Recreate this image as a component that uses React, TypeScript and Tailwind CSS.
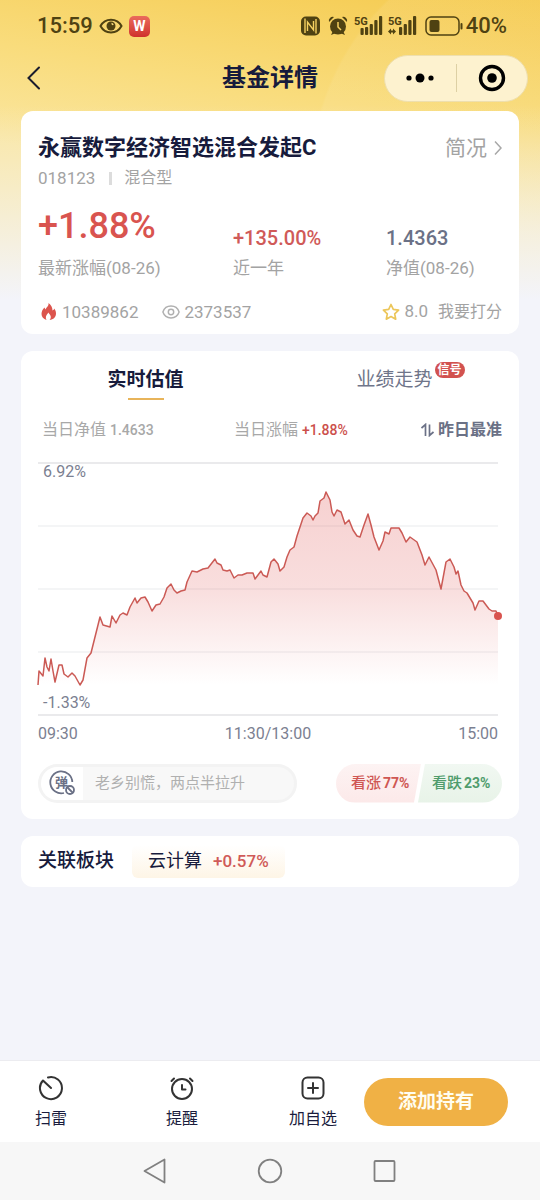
import { FC, ReactNode, useState } from "react";

interface CardProps {
    children: ReactNode;
    className?: string;
}

interface MetricProps {
    label: string;
    value: string;
    valueClass: string;
}

interface ActionProps {
    label: string;
    children: ReactNode;
}

// [x, y] in the 460 x 252 space of the chart
const points: [number, number][] = [
    [0, 222], [1, 208], [5, 213], [7, 195], [9, 204], [11, 208], [13, 196], [15, 208],
    [17, 219], [21, 202], [24, 202], [26, 211], [30, 214], [34, 210], [37, 213], [42, 222],
    [45, 217], [49, 195], [53, 190], [61, 158], [62, 154], [65, 162], [72, 164], [74, 153],
    [78, 160], [82, 152], [85, 150], [89, 152], [92, 144], [97, 135], [99, 140], [103, 135],
    [107, 134], [110, 139], [114, 148], [118, 142], [122, 141], [126, 134], [129, 125], [133, 121],
    [136, 127], [139, 130], [143, 128], [147, 127], [149, 119], [154, 108], [159, 109], [165, 106],
    [170, 105], [177, 96], [179, 100], [183, 102], [185, 107], [189, 108], [192, 107], [196, 115],
    [200, 112], [204, 112], [209, 110], [215, 110], [217, 116], [223, 108], [225, 112], [229, 114],
    [233, 99], [236, 96], [240, 101], [242, 108], [246, 104], [249, 94], [252, 87], [256, 84],
    [259, 73], [265, 55], [269, 50], [273, 53], [275, 57], [277, 53], [280, 50], [282, 38],
    [286, 35], [288, 29], [292, 37], [294, 49], [296, 53], [299, 47], [303, 49], [307, 61],
    [311, 57], [315, 67], [319, 73], [322, 74], [326, 62], [330, 51], [333, 62], [336, 74],
    [341, 87], [345, 78], [347, 69], [351, 71], [353, 65], [361, 65], [364, 70], [368, 79],
    [372, 74], [379, 79], [384, 92], [387, 102], [391, 94], [398, 107], [403, 126], [408, 99],
    [412, 96], [416, 104], [418, 111], [420, 108], [423, 122], [426, 128], [429, 130], [435, 140],
    [437, 147], [441, 138], [445, 138], [448, 142], [451, 146], [454, 148], [458, 148], [460, 153],
];

const line = points.map(([x, y]) => `${x},${y}`).join(" ");

const Card: FC<CardProps> = ({ children, className = "" }) => (
    <section className={`rounded-xl bg-white ${className}`}>{children}</section>
);

const Metric: FC<MetricProps> = ({ label, value, valueClass }) => (
    <div className="flex flex-col-reverse gap-[2px]">
        <dt className="text-[17px] leading-6 whitespace-nowrap text-[#a3a3a3]">{label}</dt>
        <dd className={valueClass}>{value}</dd>
    </div>
);

const Action: FC<ActionProps> = ({ label, children }) => (
    <button className="flex w-12 flex-col items-center gap-2 text-base leading-5 whitespace-nowrap text-[#1a1c3d]">
        <svg viewBox="0 0 26 26" fill="none" stroke="#333" strokeWidth="2" strokeLinecap="round" strokeLinejoin="round" className="size-[26px]">
            {children}
        </svg>
        {label}
    </button>
);

const Signal: FC<{ data?: boolean }> = ({ data }) => (
    <svg viewBox="0 0 30 20" fill="#4f4212" className="h-5 w-[30px]">
        <text x="0" y="9" fontSize="11" fontWeight="700" fontFamily="Roboto, sans-serif">5G</text>
        {data ? (
            <path d="M0 15.500l3-3v2h2v-2l3 3-3 3v-2H3v2z" />
        ) : (
            <rect x="6.500" y="12" width="3.200" height="7" rx="1" />
        )}
        <rect x="11" y="11" width="3.200" height="8" rx="1" />
        <rect x="15.700" y="8" width="3.200" height="11" rx="1" />
        <rect x="20.300" y="4" width="3.200" height="15" rx="1" />
        <rect x="25" y="0" width="3.200" height="19" rx="1" />
    </svg>
);

const StatusBar: FC = () => (
    <div className="flex h-[52px] items-center justify-between pr-[33px] pl-[37px] text-[22px] leading-6 font-medium text-[#4f4212]">
        <div className="flex items-center gap-[6px]">
            <span>15:59</span>
            <svg viewBox="0 0 24 18" fill="none" stroke="#4f4212" strokeWidth="2" className="h-[18px] w-6">
                <path d="M1.500 9C6 .5 18 .5 22.500 9C18 17.500 6 17.500 1.500 9z" />
                <circle cx="12" cy="9" r="4.500" fill="#4f4212" stroke="none" />
                <path d="M12.500 6.500a2 2 0 0 1 1.500 1.500" stroke="#f8dc80" strokeWidth="1.500" />
            </svg>
            <span className="flex size-[21px] items-center justify-center rounded-[5px] bg-linear-to-b from-[#ea6a5c] to-[#cf302d] text-sm font-bold text-white">
                W
            </span>
        </div>
        <div className="flex items-center">
            <svg viewBox="0 0 20 20" className="mr-[7px] size-5">
                <rect x="0" y="0.500" width="19" height="19" rx="5" fill="#4f4212" />
                <path d="M4 2.500V17M15 17.500V3M6.500 15V6L12.500 14V5" fill="none" stroke="#f6d160" strokeWidth="1.400" />
            </svg>
            <svg viewBox="0 0 20 20" fill="#4f4212" className="mr-[6px] size-5">
                <circle cx="10" cy="10.500" r="8" />
                <path d="M1 6a4 4 0 0 1 5-5zM19 6a4 4 0 0 0-5-5zM3 19l2-4 3 2zM17 19l-2-4-3 2z" />
                <path d="M10 6v5l3 3" fill="none" stroke="#f6d160" strokeWidth="1.500" />
            </svg>
            <Signal />
            <span className="w-1" />
            <Signal data />
            <svg viewBox="0 0 39 20" fill="none" stroke="#4f4212" strokeWidth="1.500" className="mr-[2px] ml-[7px] h-5 w-[39px]">
                <rect x="1" y="1" width="33" height="18" rx="5" />
                <rect x="4.500" y="4" width="10" height="12" rx="2" fill="#4f4212" stroke="none" />
                <path d="M36.500 8v4.500" strokeWidth="2" strokeLinecap="round" />
            </svg>
            <span>40%</span>
        </div>
    </div>
);

const NavBar: FC = () => (
    <header className="grid h-[52px] grid-cols-[1fr_auto_1fr] items-center px-3">
        <button aria-label="返回" className="ml-[9px] flex size-8 items-center">
            <svg viewBox="0 0 24 24" fill="none" stroke="#1a1c2d" strokeWidth="2" strokeLinecap="round" className="size-6">
                <path d="M18 1.500L7.500 12L18 22.500" />
            </svg>
        </button>
        <h1 className="text-2xl leading-8 font-bold text-[#171b3c]">基金详情</h1>
        <div className="flex h-[47px] w-36 items-center justify-self-end rounded-full border border-[#eedfae] bg-[#fdf2cf]">
            <button aria-label="更多" className="flex flex-1 justify-center">
                <svg viewBox="0 0 30 12" className="h-3 w-[30px]">
                    <circle cx="4" cy="6" r="2.600" />
                    <circle cx="15" cy="6" r="4.500" />
                    <circle cx="26" cy="6" r="2.600" />
                </svg>
            </button>
            <span className="h-7 w-px bg-[#ddd0a4]" />
            <button aria-label="关闭" className="flex flex-1 justify-center">
                <svg viewBox="0 0 28 28" className="size-7">
                    <circle cx="14" cy="14" r="11.500" fill="none" stroke="#000" strokeWidth="3.400" />
                    <circle cx="14" cy="14" r="4.800" />
                </svg>
            </button>
        </div>
    </header>
);

const FundCard: FC = () => (
    <Card className="px-[17px] pt-[21px] pb-[9px]">
        <div className="flex items-center justify-between">
            <h2 className="text-[22px] leading-8 font-bold text-[#171b3c]">永赢数字经济智选混合发起C</h2>
            <a href="#profile" className="flex items-center gap-[7px] text-[21px] leading-8 text-[#a3a3a3]">
                简况
                <svg viewBox="0 0 8 16" fill="none" stroke="#a8a8a8" strokeWidth="1.500" className="h-4 w-2">
                    <path d="M1 1.500L7 8L1 14.500" />
                </svg>
            </a>
        </div>
        <p className="flex items-center text-base leading-7 text-[#a3a3a3]">
            <span className="text-[17px]">018123</span>
            <span className="mr-3 ml-[14px] h-[13px] w-[3px] bg-[#dcdcdc]" />
            混合型
        </p>
        <dl className="mt-[6px] grid grid-cols-[195fr_153fr_116fr] items-end">
            <Metric label="最新涨幅(08-26)" value="+1.88%" valueClass="text-4xl leading-[56px] font-medium text-[#d9544f]" />
            <Metric label="近一年" value="+135.00%" valueClass="text-xl leading-8 font-medium text-[#d05a58]" />
            <Metric label="净值(08-26)" value="1.4363" valueClass="text-xl leading-8 font-medium text-[#6b7186]" />
        </dl>
        <div className="mt-[19px] flex items-center text-[17px] leading-6 text-[#a3a3a3]">
            <svg viewBox="0 0 22 20" fill="#dc544d" className="mr-[2px] h-5 w-[22px]">
                <path d="M10.500 1C11 4 8.500 5 7.500 7.500C7 7 6.800 6.300 6.500 5.500C4.500 7.500 3.500 9.500 3.500 12C3.500 15 5.500 17 8.500 18C7 15.500 8 13 10.500 10.500C10.800 12 13 13 12.800 15C12.700 16.500 12.300 17.300 11.500 18C15.500 17.500 18 15 18 11.500C18 9.500 17.300 8 16.300 6.500C16 7.500 15.500 8 14.500 8.500C14.500 5.500 13 2.500 10.500 1z" />
            </svg>
            <span>10389862</span>
            <svg viewBox="0 0 20 16" fill="none" stroke="#b0b0b0" strokeWidth="1.600" className="mr-1 ml-6 h-4 w-[18px]">
                <path d="M1 8C4 -.8 16 -.8 19 8C16 16.800 4 16.800 1 8z" />
                <circle cx="10" cy="8" r="3" />
            </svg>
            <span>2373537</span>
            <a href="#rate" className="ml-auto flex items-center text-base">
                <svg viewBox="0 0 18 18" fill="none" stroke="#ecc65a" strokeWidth="1.700" strokeLinejoin="round" className="mr-1 size-[18px]">
                    <path d="M9 1.500l2.300 4.900 5.300.7-3.900 3.700 1 5.400L9 13.600l-4.700 2.600 1-5.400L1.400 7.100l5.300-.7z" />
                </svg>
                <span className="mr-[10px] text-[17px]">8.0</span>
                我要打分
            </a>
        </div>
    </Card>
);

const Chart: FC = () => (
    <div className="relative mt-5 mr-1 text-base leading-5 text-[#7b8091]">
        <svg viewBox="0 -1 460 254" className="h-auto w-full overflow-visible">
            <defs>
                <linearGradient id="area" x1="0" y1="29" x2="0" y2="222" gradientUnits="userSpaceOnUse">
                    <stop offset="0" stopColor="#e05a58" stopOpacity="0.280" />
                    <stop offset="0.500" stopColor="#e05a58" stopOpacity="0.200" />
                    <stop offset="1" stopColor="#e05a58" stopOpacity="0" />
                </linearGradient>
            </defs>
            <path d="M0 63H460M0 126H460M0 189H460" stroke="#f1f2f3" strokeWidth="1.500" />
            <path d="M0 0H460M0 252H460" stroke="#e3e4e6" strokeWidth="1.500" />
            <polygon points={`0,222 ${line} 460,222`} fill="url(#area)" />
            <polyline points={line} fill="none" stroke="#cb5a55" strokeWidth="1.500" strokeLinejoin="round" />
            <circle cx="460" cy="153" r="4" fill="#d9544f" />
        </svg>
        <span className="absolute top-0 left-[5px]">6.92%</span>
        <span className="absolute bottom-[3px] left-[5px]">-1.33%</span>
    </div>
);

const ValuationCard: FC = () => {
    const [tab, setTab] = useState(0);

    return (
        <Card className="mt-[17px] px-[17px] pb-4">
            <div role="tablist" className="-mx-[17px] grid grid-cols-2 pt-[13px] text-[19px] leading-8">
                {["实时估值", "业绩走势"].map((name, index) => (
                    <button
                        key={name}
                        role="tab"
                        aria-selected={tab === index}
                        onClick={() => setTab(index)}
                        className="flex flex-col items-center gap-[2px]"
                    >
                        <span className={tab === index ? "relative font-bold text-[#171b3c]" : "relative text-[#6f758a]"}>
                            {name}
                            {index === 1 && (
                                <span className="absolute -top-[2px] left-full ml-[2px] rounded-full bg-[#d2524f] px-[3px] text-xs leading-4 font-bold whitespace-nowrap text-white">
                                    信号
                                </span>
                            )}
                        </span>
                        {tab === index && <span className="h-[2px] w-9 bg-[#e8b45a]" />}
                    </button>
                ))}
            </div>
            <div className="mt-[18px] grid grid-cols-[196fr_153fr_115fr] items-center text-base leading-6 whitespace-nowrap text-[#a8a8a8]">
                <p className="pl-1">
                    当日净值 <span className="text-sm font-medium">1.4633</span>
                </p>
                <p>
                    当日涨幅 <span className="text-sm font-medium text-[#cc4f4b]">+1.88%</span>
                </p>
                <button className="flex items-center gap-1 justify-self-end font-bold text-[#6b7186]">
                    <svg viewBox="0 0 13 14" fill="none" stroke="#6b7186" strokeWidth="1.700" className="h-[14px] w-[13px]">
                        <path d="M.5 5L4.500 1.500V13M8.500 1.500V12.500L12.500 9" />
                    </svg>
                    昨日最准
                </button>
            </div>
            <Chart />
            <div className="mt-[6px] mr-1 flex justify-between text-base leading-6 text-[#7b8091]">
                <span>09:30</span>
                <span>11:30/13:00</span>
                <span>15:00</span>
            </div>
            <div className="mt-[18px] flex h-[39px] gap-[39px]">
                <div className="flex min-w-0 flex-1 overflow-hidden rounded-full border-[3px] border-[#f3f3f3] bg-[#f8f8f8]">
                    <button aria-label="关闭弹幕" className="flex w-[42px] shrink-0 items-center justify-center bg-white">
                        <svg viewBox="0 0 28 28" fill="none" stroke="#6b7186" strokeWidth="1.800" className="size-7">
                            <path d="M24.300 13A11 11 0 1 0 16 24" />
                            <circle cx="22" cy="21" r="4" />
                            <path d="M19 18l6 6" />
                            <text x="7" y="18" fontSize="13" fontWeight="700" fontFamily="Noto Sans CJK SC, sans-serif" fill="#6b7186" stroke="none">弹</text>
                        </svg>
                    </button>
                    <input
                        aria-label="发弹幕"
                        placeholder="老乡别慌，两点半拉升"
                        className="min-w-0 flex-1 bg-transparent pl-3 text-[15px] leading-6 outline-none placeholder:text-[#b0b0b0]"
                    />
                </div>
                <div className="flex text-[15px] leading-6 font-medium whitespace-nowrap">
                    <button className="w-[85px] rounded-l-full bg-linear-to-b from-[#fdf3f3] to-[#fce9e9] pl-[15px] text-left text-[#cf5753] [clip-path:polygon(0_0,100%_0,calc(100%-7px)_100%,0_100%)]">
                        看涨<span className="ml-[2px] text-sm font-bold">77%</span>
                    </button>
                    <button className="-ml-[3px] w-[84px] rounded-r-full bg-linear-to-b from-[#f1f8f2] to-[#e8f3e8] pl-[14px] text-left text-[#4f9c6c] [clip-path:polygon(7px_0,100%_0,100%_100%,0_100%)]">
                        看跌<span className="ml-[2px] text-sm font-bold">23%</span>
                    </button>
                </div>
            </div>
        </Card>
    );
};

const SectorCard: FC = () => (
    <Card className="mt-[17px] flex items-center gap-[18px] px-[17px] py-[9px]">
        <h3 className="text-[19px] leading-8 font-medium text-[#171b3c]">关联板块</h3>
        <a href="#sector" className="flex h-[33px] items-center gap-[11px] rounded-md bg-linear-to-b from-white to-[#fef5e6] px-4 text-lg text-[#171b3c]">
            云计算
            <span className="text-[17px] font-medium text-[#d05a58]">+0.57%</span>
        </a>
    </Card>
);

const ActionBar: FC = () => (
    <footer className="flex h-[82px] items-start border-t border-[#ececf0] bg-white pr-8 pl-[27px]">
        <div className="mr-[27px] flex flex-1 justify-between pt-[14px]">
            <Action label="扫雷">
                <path d="M10 2.500A11 11 0 1 1 5 5.500L13 13" />
            </Action>
            <Action label="提醒">
                <circle cx="13" cy="14" r="10" />
                <path d="M2.500 6L5 3.500M23.500 6L21 3.500M13 10v4.500h3.500" />
            </Action>
            <Action label="加自选">
                <rect x="2.500" y="2.500" width="21" height="21" rx="5" />
                <path d="M13 8v10M8 13h10" />
            </Action>
        </div>
        <button className="mt-[17px] h-12 w-36 rounded-full bg-[#f0b145] text-[19px] font-bold text-[#fffdf0]">添加持有</button>
    </footer>
);

const SystemNav: FC = () => (
    <nav className="flex h-[58px] items-center justify-center gap-[89px] bg-[#f7f7f7]">
        <button aria-label="后退">
            <svg viewBox="0 0 26 26" fill="none" stroke="#808080" strokeWidth="1.800" strokeLinejoin="round" className="size-[26px]">
                <path d="M22.500 1.500V24.500L2.500 13z" />
            </svg>
        </button>
        <button aria-label="主页">
            <svg viewBox="0 0 26 26" fill="none" stroke="#808080" strokeWidth="1.800" className="size-[26px]">
                <circle cx="13" cy="13" r="11.300" />
            </svg>
        </button>
        <button aria-label="最近任务">
            <svg viewBox="0 0 26 26" fill="none" stroke="#808080" strokeWidth="1.800" className="size-[26px]">
                <rect x="2.500" y="3" width="20" height="20" rx="1" />
            </svg>
        </button>
    </nav>
);

const App: FC = () => (
    <div className="flex min-h-screen flex-col bg-[#f3f4fa] bg-[linear-gradient(to_bottom,transparent_35%,#f3f4fa_100%),radial-gradient(circle_250px_at_560px_180px,#ffffff12_99%,transparent_100%),linear-gradient(190deg,#f5ca4e_0%,#f9dc7c_35%,#fae6a0_60%)] bg-[length:100%_300px] bg-no-repeat font-[Roboto,'Noto_Sans_CJK_SC',sans-serif]">
        <StatusBar />
        <NavBar />
        <main className="flex-1 px-[21px] pt-[7px] pb-6">
            <FundCard />
            <ValuationCard />
            <SectorCard />
        </main>
        <ActionBar />
        <SystemNav />
    </div>
);

export default App;
